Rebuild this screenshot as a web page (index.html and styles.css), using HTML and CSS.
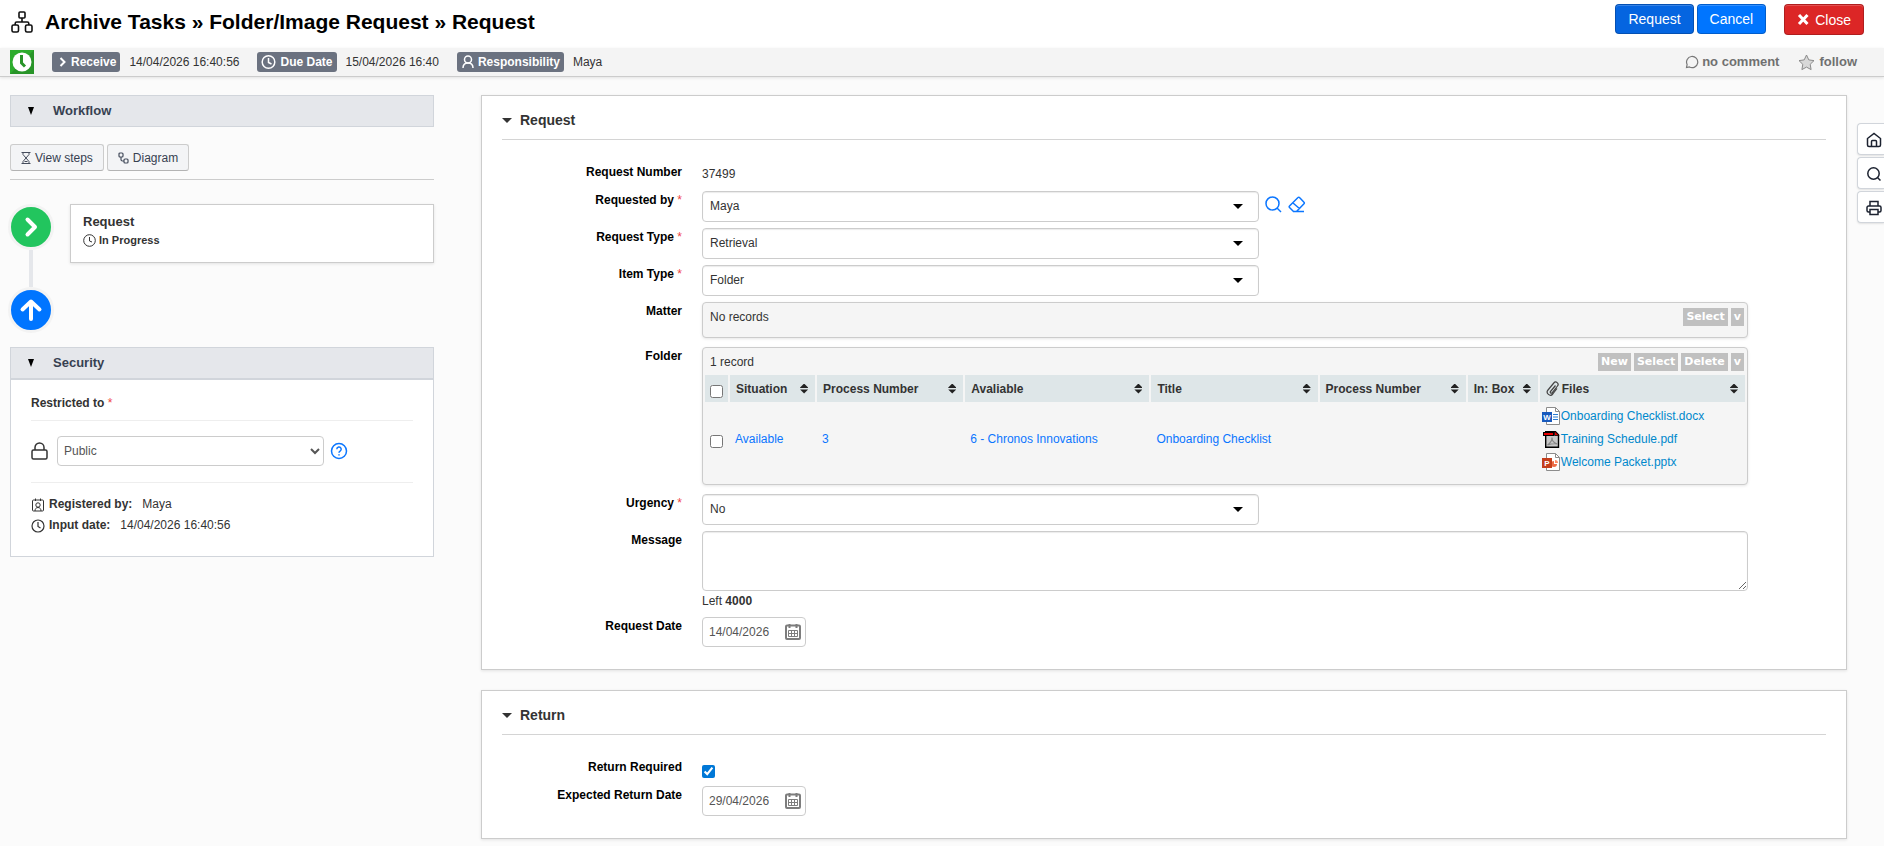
FILE: index.html
```html
<!doctype html>
<html lang="en">

<head>
	<meta charset="utf-8">
	<title>Archive Tasks - Request</title>
	<link rel="stylesheet" href="styles.css">
</head>

<body>
	<!-- title and actions -->
	<header class="topbar">
		<svg class="topbar-icon" width="22" height="22" viewBox="0 0 22 22" fill="none" stroke="#111" stroke-width="1.600">
			<rect x="8" y="1" width="6" height="6" rx="1"/>
			<rect x="1" y="14" width="6.500" height="7" rx="1.500"/>
			<rect x="14.500" y="14" width="6.500" height="7" rx="1.500"/>
			<path d="M11 7v4M4.200 14v-1.500a1.500 1.500 0 0 1 1.500-1.500h10.600a1.500 1.500 0 0 1 1.500 1.500V14"/>
		</svg>
		<h1 class="topbar-title">Archive Tasks » Folder/Image Request » Request</h1>
		<div class="topbar-actions">
			<button type="button" class="btn btn-request">Request</button>
			<button type="button" class="btn btn-cancel">Cancel</button>
			<button type="button" class="btn btn-close">
				<svg width="13" height="13" viewBox="0 0 13 13" stroke="#fff" stroke-width="3"><path d="M2 2l8.500 9M10.500 2L2 11"/></svg>Close</button>
		</div>
	</header>

	<!-- status line -->
	<div class="statusbar">
		<svg class="status-clock" width="24" height="24" viewBox="0 0 24 24">
			<rect width="24" height="24" fill="#289428"/>
			<path d="M0 0h24L0 24z" fill="#2dac2d"/>
			<circle cx="12" cy="12" r="9.500" fill="#fff"/>
			<path d="M11.500 5v8l3.500 3.500" fill="none" stroke="#289428" stroke-width="3"/>
		</svg>
		<span class="badge badge-receive">
			<svg width="12" height="14" viewBox="0 0 12 14" fill="none" stroke="#fff" stroke-width="2"><path d="M4.500 3l4 4-4 4"/></svg>Receive</span>
		<span class="status-value">14/04/2026 16:40:56</span>
		<span class="badge badge-due">
			<svg width="15" height="16" viewBox="0 0 15 16" fill="none" stroke="#fff" stroke-width="1.500"><circle cx="7.500" cy="8" r="6.300"/><path d="M7.500 4v4.500l3 1.500"/></svg>Due Date</span>
		<span class="status-value">15/04/2026 16:40</span>
		<span class="badge badge-resp">
			<svg width="14" height="16" viewBox="0 0 14 16" fill="none" stroke="#fff" stroke-width="1.500"><circle cx="7" cy="5.500" r="3.500"/><path d="M2 14c0-3 2-5 5-5s5 2 5 5"/></svg>Responsibility</span>
		<span class="status-value">Maya</span>
		<a href="#" class="status-link status-comment">
			<svg width="14" height="14" viewBox="0 0 14 14" fill="none" stroke="#777" stroke-width="1.200"><path d="M1.500 12.500l.6-3A5.600 5.600 0 1 1 4.500 12z"/></svg>no comment</a>
		<a href="#" class="status-link">
			<svg width="17" height="17" viewBox="0 0 17 17" fill="#d8d8d8" stroke="#8a8a8a"><path d="M8.500 1l2.300 4.900 5.200.7-3.800 3.700.9 5.300-4.600-2.500-4.600 2.500.9-5.300L1 6.600l5.200-.7z"/></svg>follow</a>
	</div>

	<div class="layout">
		<!-- left column -->
		<aside class="sidebar">
			<h2 class="side-head"><svg width="6" height="8" viewBox="0 0 6 8"><path d="M0 0h6L3 8z"/></svg>Workflow</h2>
			<div class="side-buttons">
				<button type="button" class="btn-small">
					<svg width="10" height="12" viewBox="0 0 10 12" fill="none" stroke="#444c5c"><path d="M.5.5h9M.5 11.500h9M2 .5v2L5 6l3-3.500v-2M2 11.500v-2L5 6l3 3.500v2M3.500 9.500h3"/></svg>View steps</button>
				<button type="button" class="btn-small">
					<svg width="11" height="12" viewBox="0 0 11 12" fill="none" stroke="#444c5c" stroke-width="1.200"><rect x="1" y="1" width="4" height="4" rx="1"/><rect x="6" y="7" width="4" height="4" rx="1"/><path d="M3 5v2.500a1.500 1.500 0 0 0 1.500 1.500H6"/></svg>Diagram</button>
			</div>
			<div class="steps">
				<div class="step-track">
					<span class="step-dot step-dot-go">
						<svg width="24" height="24" viewBox="0 0 24 24" fill="none" stroke="#fff" stroke-width="4" stroke-linecap="round" stroke-linejoin="round"><path d="M8.500 4.500L16 12l-7.500 7.500"/></svg>
					</span>
					<span class="step-line"></span>
					<span class="step-dot step-dot-up">
						<svg width="24" height="24" viewBox="0 0 24 24" fill="none" stroke="#fff" stroke-width="4" stroke-linecap="round" stroke-linejoin="round"><path d="M12 21V4M3.500 11.500L12 3.500l8.500 8"/></svg>
					</span>
				</div>
				<div class="step-card">
					<strong class="step-name">Request</strong>
					<span class="step-state">
						<svg width="13" height="13" viewBox="0 0 13 13" fill="none" stroke="#333"><circle cx="6.500" cy="6.500" r="5.800"/><path d="M6.500 3v4l2.500 1"/></svg>In Progress</span>
				</div>
			</div>

			<h2 class="side-head side-head-open"><svg width="6" height="8" viewBox="0 0 6 8"><path d="M0 0h6L3 8z"/></svg>Security</h2>
			<div class="side-body">
				<label class="side-label" for="restricted">Restricted to <span class="req">*</span></label>
				<div class="restrict">
					<svg width="17" height="18" viewBox="0 0 17 18" fill="none" stroke="#333" stroke-width="1.500"><rect x="1" y="8" width="15" height="9" rx="1.500"/><path d="M4 8V5.500a4.500 4.500 0 0 1 9 0V8"/></svg>
					<select class="restrict-select" id="restricted"><option>Public</option></select>
					<svg width="18" height="18" viewBox="0 0 18 18" fill="none" stroke="#0b76ff" stroke-width="1.500"><circle cx="9" cy="9" r="7.500"/><path d="M6.800 7.200a2.200 2.200 0 1 1 3.300 1.900c-.8.5-1.100.8-1.100 1.600M9 12.300v1.300"/></svg>
				</div>
				<p class="meta">
					<svg width="14" height="14" viewBox="0 0 14 14" fill="none" stroke="#333"><rect x="1.500" y="2" width="11" height="11" rx="1"/><path d="M4.500.5V3M9.500.5V3M4 13c0-2 1-3.500 3-3.500s3 1.500 3 3.500"/><circle cx="7" cy="7" r="2.200"/></svg><b>Registered by:</b><span>Maya</span></p>
				<p class="meta">
					<svg width="14" height="14" viewBox="0 0 14 14" fill="none" stroke="#333" stroke-width="1.200"><circle cx="7" cy="7" r="6"/><path d="M7 3v4.500l2.500 1.500"/></svg><b>Input date:</b><span>14/04/2026 16:40:56</span></p>
			</div>
		</aside>

		<!-- form -->
		<main class="content">
			<section class="panel">
				<h2 class="panel-title">Request</h2>
				<div class="form">
					<span class="form-label">Request Number</span>
					<div class="form-text">37499</div>

					<label class="form-label" for="requested-by">Requested by <span class="req">*</span></label>
					<div class="field">
						<div class="combo"><select id="requested-by"><option>Maya</option></select></div>
						<button type="button" class="icon-btn" aria-label="Search">
							<svg width="17" height="17" viewBox="0 0 17 17" fill="none" stroke="#0b76ff" stroke-width="1.500"><circle cx="7.500" cy="7.500" r="6.500"/><path d="M12 12l4 4"/></svg></button>
						<button type="button" class="icon-btn" aria-label="Clear">
							<svg width="18" height="17" viewBox="0 0 18 17" fill="none" stroke="#0b76ff" stroke-width="1.500" stroke-linejoin="round"><path d="M5.500 15.500L1.500 11.500a1 1 0 0 1 0-1.500L10 1.500a1 1 0 0 1 1.500 0L16 6.300a1 1 0 0 1 0 1.500l-7.500 7.700M5 7l7 6M5 15.500h11"/></svg></button>
					</div>

					<label class="form-label" for="request-type">Request Type <span class="req">*</span></label>
					<div class="combo"><select id="request-type"><option>Retrieval</option></select></div>

					<label class="form-label" for="item-type">Item Type <span class="req">*</span></label>
					<div class="combo"><select id="item-type"><option>Folder</option></select></div>

					<span class="form-label">Matter</span>
					<div class="records records-empty">
						<div class="records-bar">
							<span class="records-count">No records</span>
							<button type="button" class="tag-btn">Select</button>
							<button type="button" class="tag-btn">v</button>
						</div>
					</div>

					<span class="form-label">Folder</span>
					<div class="records">
						<div class="records-bar">
							<span class="records-count">1 record</span>
							<button type="button" class="tag-btn">New</button>
							<button type="button" class="tag-btn">Select</button>
							<button type="button" class="tag-btn">Delete</button>
							<button type="button" class="tag-btn">v</button>
						</div>
						<table class="grid">
							<colgroup>
								<col class="col-check"><col class="col-situation"><col class="col-process"><col class="col-available">
								<col class="col-title"><col class="col-process"><col class="col-box"><col class="col-files">
							</colgroup>
							<thead>
								<tr>
									<th class="cell-check"><input type="checkbox" aria-label="Select all"></th>
									<th><div class="sort">Situation</div></th>
									<th><div class="sort">Process Number</div></th>
									<th><div class="sort">Avaliable</div></th>
									<th><div class="sort">Title</div></th>
									<th><div class="sort">Process Number</div></th>
									<th><div class="sort">In: Box</div></th>
									<th><div class="sort"><svg width="13" height="15" viewBox="0 0 13 15" fill="none" stroke="#444" stroke-width="1.200"><path d="M9.500 4.500L4.500 10.500a1 1 0 0 0 1.600 1.300L11.500 5a2.300 2.300 0 0 0-3.700-3L2 9a3 3 0 0 0 4.800 4L11 7.500"/></svg>Files</div></th>
								</tr>
							</thead>
							<tbody>
								<tr>
									<td class="cell-check"><input type="checkbox" aria-label="Select row"></td>
									<td><a href="#">Available</a></td>
									<td><a href="#">3</a></td>
									<td><a href="#">6 - Chronos Innovations</a></td>
									<td><a href="#">Onboarding Checklist</a></td>
									<td></td>
									<td></td>
									<td class="cell-files">
										<a href="#" class="file"><svg width="18" height="18" viewBox="0 0 18 18"><path d="M4.500.5h9l4 4v13h-13z" fill="#fff" stroke="#8c8c8c"/><path d="M13.500.5v4h4" fill="none" stroke="#8c8c8c"/><path d="M11 7.500h5M11 10h5M11 12.500h5" stroke="#2b7cd3"/><rect y="5" width="10" height="10" fill="#185abd"/><text class="file-letter" x="5" y="13">W</text></svg>Onboarding Checklist.docx</a>
										<a href="#" class="file"><svg width="18" height="18" viewBox="0 0 18 18"><path d="M3.700 1.700h9.800l3 3v12.500H3.700z" fill="#c8c8c8" stroke="#000" stroke-width="1.400"/><path d="M12.500 1v4.500H17z" fill="#e00000" stroke="#000" stroke-width=".8"/><path d="M5.500 15c3-2 4.500-4.500 4.500-7.500 0 3 2 5.500 5.500 6.500-3-.5-7 0-10 1z" fill="none" stroke="#888" stroke-width="1.200"/><rect x="1.500" y="2.500" width="10" height="3" fill="#e80000" stroke="#000"/></svg>Training Schedule.pdf</a>
										<a href="#" class="file"><svg width="18" height="18" viewBox="0 0 18 18"><path d="M4.500.5h9l4 4v13h-13z" fill="#fff" stroke="#8c8c8c"/><path d="M13.500.5v4h4" fill="none" stroke="#8c8c8c"/><path d="M12 8a3 3 0 1 0 3 3h-3z" fill="#ed6c47"/><path d="M13 7a3 3 0 0 1 3 3h-3z" fill="#ff8f6b"/><rect y="5" width="10" height="10" fill="#c43e1c"/><text class="file-letter" x="5" y="13">P</text></svg>Welcome Packet.pptx</a>
									</td>
								</tr>
							</tbody>
						</table>
					</div>

					<label class="form-label" for="urgency">Urgency <span class="req">*</span></label>
					<div class="combo"><select id="urgency"><option>No</option></select></div>

					<label class="form-label" for="message">Message</label>
					<div>
						<textarea class="message" id="message"></textarea>
						<p class="counter">Left <b>4000</b></p>
					</div>

					<label class="form-label" for="request-date">Request Date</label>
					<div class="date">
						<input type="text" id="request-date" value="14/04/2026">
						<button type="button" class="icon-btn" aria-label="Open calendar">
							<svg width="16" height="16" viewBox="0 0 16 16" fill="none" stroke="#7d7d7d"><rect x="1" y="1.500" width="14" height="13.500" rx="1" stroke-width="2"/><path d="M4.500 0v4M11.500 0v4" stroke-width="2"/><path d="M3.500 6.500h9v6h-9zM3.500 9.500h9M6.500 6.500v6M9.500 6.500v6"/></svg></button>
					</div>
				</div>
			</section>

			<section class="panel">
				<h2 class="panel-title">Return</h2>
				<div class="form">
					<label class="form-label" for="return-required">Return Required</label>
					<div class="check-field"><input type="checkbox" id="return-required" checked></div>

					<label class="form-label" for="return-date">Expected Return Date</label>
					<div class="date">
						<input type="text" id="return-date" value="29/04/2026">
						<button type="button" class="icon-btn" aria-label="Open calendar">
							<svg width="16" height="16" viewBox="0 0 16 16" fill="none" stroke="#7d7d7d"><rect x="1" y="1.500" width="14" height="13.500" rx="1" stroke-width="2"/><path d="M4.500 0v4M11.500 0v4" stroke-width="2"/><path d="M3.500 6.500h9v6h-9zM3.500 9.500h9M6.500 6.500v6M9.500 6.500v6"/></svg></button>
					</div>
				</div>
			</section>
		</main>

		<!-- shortcuts on the right edge -->
		<nav class="rail">
			<a href="#" class="rail-link" aria-label="Home">
				<svg width="16" height="16" viewBox="0 0 16 16" fill="none" stroke="#1c2230" stroke-width="1.500"><path d="M1.500 6.500L8 1.500l6.500 5V13a1.500 1.500 0 0 1-1.500 1.500H3A1.500 1.500 0 0 1 1.500 13z"/><path d="M5.500 14.500V9.500a1 1 0 0 1 1-1h3a1 1 0 0 1 1 1v5"/></svg></a>
			<a href="#" class="rail-link" aria-label="Search">
				<svg width="16" height="16" viewBox="0 0 16 16" fill="none" stroke="#1c2230" stroke-width="1.500"><circle cx="7.500" cy="7.500" r="5.700"/><path d="M11.500 11.500l3 3"/></svg></a>
			<a href="#" class="rail-link" aria-label="Print">
				<svg width="16" height="16" viewBox="0 0 16 16" fill="none" stroke="#1c2230" stroke-width="1.500"><path d="M4 6V1.500h8V6M4 12H2.500A1.500 1.500 0 0 1 1 10.500v-3A1.500 1.500 0 0 1 2.500 6h11A1.500 1.500 0 0 1 15 7.500v3a1.500 1.500 0 0 1-1.500 1.500H12"/><rect x="4" y="9.500" width="8" height="5"/></svg></a>
		</nav>
	</div>
</body>

</html>
```
FILE: styles.css
```css
* { box-sizing: border-box; margin: 0; padding: 0; }
body {
	background: #fbfbfb;
	color: #333;
	font: 12px/18px "Liberation Sans", Arial, sans-serif;
}
button, input, select, textarea { font: inherit; color: inherit; }
button { cursor: pointer; }
a { color: #0b76ff; text-decoration: none; }
svg { display: block; flex: none; }
input[type="checkbox"] {
	display: block;
	width: 13px;
	height: 13px;
	accent-color: #0078d7;
}

/* header */
.topbar {
	display: flex;
	align-items: flex-start;
	height: 48px;
	padding: 4px 20px 0 11px;
	background: #fff;
}
.topbar-icon { margin-top: 7px; }
.topbar-title {
	flex: 1;
	margin: 6px 0 0 12px;
	color: #000;
	font-size: 21px;
	line-height: 24px;
}
.topbar-actions { display: flex; gap: 3px; }
.btn {
	display: flex;
	align-items: center;
	gap: 5px;
	height: 30px;
	padding: 0 12px;
	border: 1px solid rgba(0, 0, 0, 0.2);
	border-radius: 4px;
	color: #fff;
	font-size: 14px;
	box-shadow: inset 0 1px 0 rgba(255, 255, 255, 0.2);
}
.btn-request { background: #0565e0; }
.btn-cancel { background: #0075ff; }
.btn-close { height: 31px; margin-left: 15px; background: #dc2626; }

/* status line */
.statusbar {
	display: flex;
	align-items: center;
	height: 29px;
	padding: 0 27px 0 10px;
	background: #f4f4f4;
	border-bottom: 1px solid #ccc;
	box-shadow: 0 1px 3px rgba(0, 0, 0, 0.1);
}
.status-clock { margin-right: 18px; }
.badge {
	display: flex;
	align-items: center;
	gap: 3px;
	height: 20px;
	padding: 0 4px;
	background: #6b7280;
	border-radius: 3px;
	color: #fff;
	font-weight: bold;
}
.badge-due { gap: 4px; }
.status-value { margin: 0 18px 0 9px; }
.status-link {
	display: flex;
	align-items: center;
	gap: 4px;
	margin-left: 19px;
	color: #707070;
	font-size: 13px;
	font-weight: bold;
}
.status-comment { gap: 3px; margin-left: auto; }

/* columns */
.layout {
	display: grid;
	grid-template-columns: 424px minmax(0, 1fr) 27px;
	padding: 18px 0 7px 10px;
}
.content {
	display: flex;
	flex-direction: column;
	gap: 20px;
	margin: 0 10px 0 47px;
}

/* sidebar */
.side-head {
	display: flex;
	align-items: center;
	gap: 19px;
	height: 32px;
	padding-left: 17px;
	background: #e5e7eb;
	border: 1px solid #d1d5db;
	color: #374151;
	font-size: 13px;
}
.side-head svg { fill: #000; }
.side-head-open { height: 33px; border-bottom-width: 2px; }
.side-buttons {
	display: flex;
	gap: 3px;
	margin-top: 17px;
	padding-bottom: 8px;
	border-bottom: 1px solid #ccc;
}
.btn-small {
	display: flex;
	align-items: center;
	gap: 4px;
	height: 27px;
	padding: 0 10px;
	background: #f3f4f6;
	border: 1px solid #ccc;
	border-bottom-color: #b3b3b3;
	border-radius: 3px;
	color: #374151;
}
.steps {
	display: flex;
	align-items: flex-start;
	gap: 16px;
	margin: 24px 0 14px;
}
.step-track {
	display: flex;
	flex-direction: column;
	align-items: center;
	width: 46px;
	margin-left: -2px;
}
.step-dot {
	display: grid;
	place-items: center;
	width: 46px;
	height: 46px;
	border: 3px solid #f3f3f3;
	border-radius: 50%;
}
.step-dot-go { background: #22c55e; }
.step-dot-up { background: #0075ff; }
.step-line { width: 4px; height: 37px; background: #e5e7eb; }
.step-card {
	flex: 1;
	min-height: 59px;
	padding: 8px 12px;
	background: #fff;
	border: 1px solid #ccc;
	box-shadow: 0 1px 3px rgba(0, 0, 0, 0.1);
}
.step-name { display: block; font-size: 13px; }
.step-state {
	display: flex;
	align-items: center;
	gap: 3px;
	font-size: 11px;
	font-weight: bold;
}
.side-body {
	padding: 14px 20px 20px;
	background: #fff;
	border: 1px solid #d1d5db;
	border-top: 0;
}
.side-label {
	display: block;
	padding-bottom: 8px;
	font-weight: bold;
}
.req { color: #ef4444; font-weight: normal; }
.restrict {
	display: flex;
	align-items: center;
	gap: 6px;
	margin-bottom: 11px;
	padding: 15px 0 16px;
	border: solid #eee;
	border-width: 1px 0;
}
.restrict-select {
	flex: 0 1 267px;
	height: 30px;
	margin-left: 3px;
	padding: 0 2px;
	background: #fff;
	border: 1px solid #ccc;
	border-radius: 4px;
	color: #555;
}
.meta {
	display: flex;
	align-items: center;
	gap: 4px;
	line-height: 21px;
}
.meta span { margin-left: 6px; }

/* panels */
.panel {
	padding: 15px 20px 22px;
	background: #fff;
	border: 1px solid #ccc;
	box-shadow: 0 1px 3px rgba(0, 0, 0, 0.1);
}
.panel-title {
	display: flex;
	align-items: center;
	gap: 8px;
	padding-bottom: 10px;
	border-bottom: 1px solid #d4d4d4;
	font-size: 14px;
}
.panel-title::before {
	content: "";
	border: solid transparent;
	border-width: 5px 5px 0;
	border-top-color: #333;
}
.form {
	display: grid;
	grid-template-columns: 180px minmax(0, 1fr);
	gap: 6px 20px;
	padding: 23px 78px 0 0;
}
.form-label { color: #000; font-weight: bold; text-align: right; }
.form-text { line-height: 22px; }
.field { display: flex; }
.combo {
	position: relative;
	width: 100%;
	max-width: 557px;
}
.combo select {
	display: block;
	width: 100%;
	height: 31px;
	padding: 0 7px 1px;
	appearance: none;
	background: #fff;
	border: 1px solid #ccc;
	border-radius: 4px;
	box-shadow: inset 0 1px 1px rgba(0, 0, 0, 0.08);
}
/* drop-down arrow */
.combo::after {
	content: "";
	position: absolute;
	top: 13px;
	right: 16px;
	border: solid transparent;
	border-width: 5px 5px 0;
	border-top-color: #000;
	pointer-events: none;
}
.icon-btn { background: none; border: 0; }
.field .icon-btn {
	align-self: flex-start;
	margin: 5px 0 0 6px;
}

/* record lists */
.records {
	margin-bottom: 3px;
	background: #f5f5f5;
	border: 1px solid #ccc;
	border-radius: 4px;
	box-shadow: 0 1px 3px rgba(0, 0, 0, 0.1);
}
.records-bar {
	display: flex;
	gap: 3px;
	padding: 5px 3px 2px 7px;
}
.records-empty { padding-bottom: 9px; }
.records-count { flex: 1; }
.tag-btn {
	height: 18px;
	padding: 0 3px;
	background: #c0c0c0;
	border: 0;
	color: #fff;
	font: bold 11px/18px "DejaVu Sans", Verdana, sans-serif;
}
.grid {
	width: 100%;
	margin-bottom: 9px;
	border-spacing: 2px;
	table-layout: fixed;
}
.col-check { width: 23px; }
.col-situation { width: 85px; }
.col-process { width: 146px; }
.col-available { width: 184px; }
.col-title { width: 166px; }
.col-box { width: 70px; }
.col-files { width: 205px; }
.grid th {
	height: 27px;
	padding: 0 7px 0 6px;
	background: #dee6e8;
	text-align: left;
}
.grid td { padding: 0 5px; }
.grid .cell-check { padding: 5px 0 0 5px; }
.grid .cell-files { padding: 0 2px; }
.sort { display: flex; align-items: center; gap: 3px; }
.sort::after {
	content: "";
	width: 8px;
	height: 10px;
	margin-left: auto;
	background: #222;
	clip-path: polygon(50% 0, 100% 40%, 100% 45%, 0 45%, 0 60%, 100% 60%, 50% 100%, 0 60%, 0 40%);
}
.file {
	display: flex;
	align-items: center;
	gap: 1px;
	height: 23px;
	color: #08c;
}
.file-letter {
	fill: #fff;
	font-size: 8px;
	font-weight: bold;
	text-anchor: middle;
}

.message {
	display: block;
	width: 100%;
	height: 60px;
	padding: 6px;
	border: 1px solid #ccc;
	border-radius: 4px;
	box-shadow: inset 0 1px 1px rgba(0, 0, 0, 0.08);
	resize: vertical;
}
.counter { line-height: 20px; }
.date {
	display: flex;
	align-items: center;
	width: 104px;
	height: 30px;
	padding: 0 4px 0 6px;
	background: #fff;
	border: 1px solid #ccc;
	border-radius: 4px;
	color: #555;
}
.date input {
	flex: 1;
	min-width: 0;
	background: none;
	border: 0;
}
.check-field { height: 22px; padding-top: 7px; }

/* right edge */
.rail {
	display: flex;
	flex-direction: column;
	gap: 2px;
	padding-top: 28px;
}
.rail-link {
	display: flex;
	align-items: center;
	height: 32px;
	padding: 2px 0 0 8px;
	background: #fff;
	border: 1px solid #d1d5db;
	border-right: 0;
	border-radius: 4px 0 0 4px;
	box-shadow: 0 1px 2px rgba(0, 0, 0, 0.1);
}
```
